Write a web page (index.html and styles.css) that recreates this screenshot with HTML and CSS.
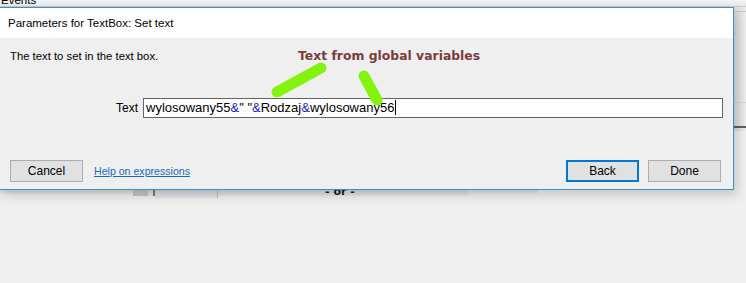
FILE: index.html
```html
<!DOCTYPE html>
<html lang="en">
<head>
  <meta charset="UTF-8" />
  <title>Parameters for TextBox: Set text</title>
  <link rel="stylesheet" href="styles.css">
</head>
<body>
  <div class="desktop">
    <!-- background editor, partly hidden by the dialog -->
    <div class="events-bar"><span>Events</span></div>
    <div class="side-strip">
      <div class="side-line l1"></div>
      <div class="side-line l2"></div>
      <div class="side-line l3"></div>
    </div>
    <div class="under-strip">
      <div class="under-block b1"></div>
      <div class="under-block b2"></div>
      <div class="under-block b3"></div>
      <div class="under-block b4"><span class="or">- or -</span></div>
      <div class="under-block b5"></div>
      <div class="under-block b6"></div>
    </div>

    <!-- dialog window -->
    <div class="dialog">
      <div class="dialog-title">Parameters for TextBox: Set text</div>
      <div class="dialog-body">
        <p class="description">The text to set in the text box.</p>
        <div class="field-row">
          <label class="field-label" for="text">Text</label>
          <div class="field-input" id="text">wylosowany55<span class="op">&amp;</span>" "<span class="op">&amp;</span>Rodzaj<span class="op">&amp;</span>wylosowany56<span class="caret"></span></div>
        </div>
        <div class="button-row">
          <button type="button" class="btn">Cancel</button>
          <a class="help-link" href="#">Help on expressions</a>
          <div class="spacer"></div>
          <button type="button" class="btn btn-focus">Back</button>
          <button type="button" class="btn">Done</button>
        </div>
      </div>
    </div>

    <!-- annotation drawn on top of the screenshot -->
    <div class="note">Text from global variables</div>
    <svg class="marks" width="746" height="283" viewBox="0 0 746 283">
      <line x1="277" y1="92" x2="321" y2="68" />
      <line x1="364" y1="76" x2="377" y2="100" />
    </svg>
  </div>
</body>
</html>
```

FILE: styles.css
```css
body {
  margin: 0;
  background-color: #f0f0f0;
  font-family: 'Liberation Sans', Arial, sans-serif;
  font-size: 12px;
  color: #000;
}

.desktop {
  position: relative;
  width: 746px;
  height: 283px;
  overflow: hidden;
  background-color: #f0f0f0;
}

/* background editor bits */
.events-bar {
  height: 6px;
  overflow: hidden;
  background: linear-gradient(#f4f4f4, #e6e6e6);
  border-bottom: 1px solid #c8c8c8;
}

.events-bar span {
  display: block;
  margin-top: -7px;
  padding-left: 1px;
  line-height: 14px;
  font-size: 11.5px;
}

.side-strip {
  position: absolute;
  top: 7px;
  right: 0;
  width: 13px;
  height: 124px;
  background: linear-gradient(90deg, #d8d8d8, #ececec);
}

.side-line {
  position: absolute;
  left: 0;
  right: 0;
  height: 1px;
  background-color: #c4c4c4;
}

.side-line.l1 { top: 4px; }
.side-line.l2 { top: 95px; background-color: #d4d4d4; }
.side-line.l3 { top: 119px; height: 2px; background-color: #5e5e5e; }

.under-strip {
  position: absolute;
  top: 189px;
  left: 0;
  width: 746px;
  height: 12px;
  display: flex;
  align-items: flex-start;
}

.under-block {
  background: linear-gradient(#d3d6dc, #e6e8ec);
}

.under-block.b1 { width: 133px; height: 5px; background: linear-gradient(#d6d6d6, #e8e8e8); }
.under-block.b2 { width: 15px; height: 7px; background: #c4c4c4; }
.under-block.b3 { width: 5px; height: 7px; border-right: 2px solid #7a7a7a; }
.under-block.b4 {
  width: 62px;
  height: 9px;
  border-right: 1px solid #b8bcc4;
  position: relative;
}
.under-block.b5 { width: 250px; height: 7px; }
.under-block.b6 { width: 70px; height: 5px; background: linear-gradient(#dcdde0, #ebebed); }

.or {
  position: absolute;
  left: 170px;
  top: -4px;
  font-family: 'DejaVu Sans', sans-serif;
  font-weight: bold;
  font-size: 11px;
  line-height: 13px;
  color: #202020;
  white-space: nowrap;
}

/* dialog */
.dialog {
  position: absolute;
  left: -2px;
  top: 7px;
  width: 734px;
  height: 181px;
  border: 1px solid #3b8fd0;
  background-color: #efefef;
  box-shadow: 4px 6px 10px rgba(0, 0, 0, 0.16);
}

.dialog-title {
  height: 30px;
  line-height: 30px;
  padding-left: 9px;
  background-color: #fff;
  font-size: 11.5px;
}

.dialog-body {
  padding: 0 10px 0 11px;
}

.description {
  margin: 0;
  padding-top: 11px;
  line-height: 15px;
  font-size: 11.3px;
}

.field-row {
  display: flex;
  align-items: center;
  margin-top: 34px;
  padding-left: 106px;
}

.field-label {
  width: 21px;
  margin-right: 6px;
  text-align: right;
}

.field-input {
  width: 576px;
  height: 18px;
  line-height: 18px;
  padding-left: 2px;
  border: 1px solid #646464;
  background-color: #fff;
  font-size: 13px;
  white-space: nowrap;
}

.op {
  color: #1818c8;
}

.caret {
  display: inline-block;
  width: 1px;
  height: 15px;
  margin-left: 1px;
  vertical-align: -3px;
  background-color: #000;
}

.button-row {
  display: flex;
  align-items: center;
  margin-top: 42px;
  padding-right: 2px;
}

.btn {
  width: 73px;
  height: 22px;
  padding: 0;
  border: 1px solid #adadad;
  background-color: #e1e1e1;
  font-family: 'Liberation Sans', Arial, sans-serif;
  font-size: 12px;
  color: #000;
}

.btn + .btn {
  margin-left: 9px;
}

.btn-focus {
  border: 2px solid #0078d7;
}

.help-link {
  margin-left: 11px;
  color: #1668c0;
  font-size: 10.6px;
  text-decoration: underline;
}

.spacer {
  flex: 1;
}

/* annotation */
.note {
  position: absolute;
  left: 298px;
  top: 48px;
  font-family: 'DejaVu Sans', sans-serif;
  font-weight: bold;
  font-size: 12.4px;
  color: #7b3c3c;
}

.marks {
  position: absolute;
  left: 0;
  top: 0;
}

.marks line {
  stroke: #84f40e;
  stroke-width: 11;
  stroke-linecap: round;
}
```
